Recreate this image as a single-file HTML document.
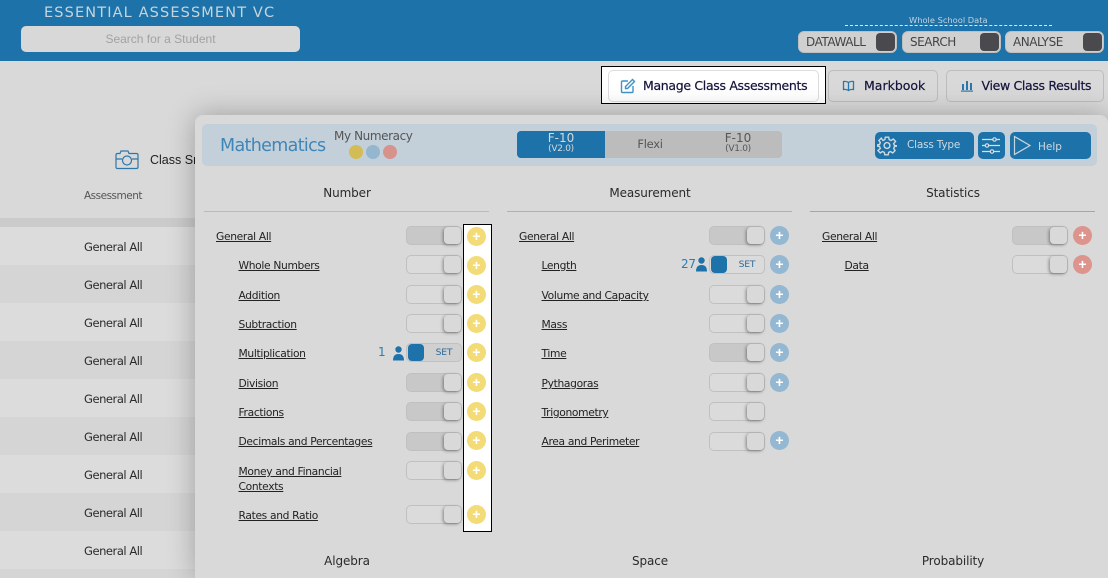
<!DOCTYPE html>
<html><head><meta charset="utf-8"><style>
html,body{margin:0;padding:0;width:1108px;height:578px;overflow:hidden}
#w{width:1108px;height:578px;position:relative;overflow:hidden;background:#d9d9d9;font-family:"DejaVu Sans","Liberation Sans",sans-serif;color:#222;font-size:11.5px}
.a{position:absolute;white-space:nowrap}
.tc{text-align:center}
.row{position:absolute;left:0;width:195px;height:38px}
.row span{position:absolute;left:84px;top:13px;font-size:11.5px;color:#2b2b2b;letter-spacing:-.45px}
.btn{position:absolute;box-sizing:border-box;border:1px solid #bdbdbd;border-radius:5px;height:32px;font-size:12.5px;font-weight:400;color:#14143c;-webkit-text-stroke:.2px #14143c;line-height:29px;white-space:nowrap}
.pill{position:absolute;top:31px;height:22px;box-sizing:border-box;background:#d0d0d0;border:1px solid #bfbfbf;border-radius:6px;font-size:12px;color:#444;line-height:20px;letter-spacing:-.45px}
.pill i{position:absolute;right:1px;top:1px;width:19px;height:18px;background:#4a4a4e;border-radius:4px}
.pill span{position:absolute;left:7px}
.lnk{position:absolute;font-size:10.7px;color:#222;text-decoration:underline;white-space:nowrap;line-height:15px;letter-spacing:-.33px}
.t{position:absolute;width:56px;height:19px;box-sizing:border-box;border:1px solid #c0c0c0;border-radius:5px;background:#dbdbdb}
.t.on{background:#c8c8c8}
.t b{position:absolute;right:0;top:0;width:17px;height:17px;background:#d9d9d9;border-radius:4px;box-shadow:-1px 1px 3px rgba(0,0,0,.4)}
.t.s b{right:auto;left:1px;top:0;width:16px;background:#1d72aa;box-shadow:none}
.t.s em{position:absolute;left:19px;width:36px;text-align:center;top:3px;font:normal 9.2px "DejaVu Sans",sans-serif;color:#2a6a9c;letter-spacing:-.2px}
.p{position:absolute;width:19px;height:19px;border-radius:50%;color:#fff;text-align:center;font:bold 14px/18px "Liberation Sans",sans-serif}
.y{background:#f3dc78}.bl{background:#94b8d2}.r{background:#dd948d}
.h{position:absolute;font-size:12px;width:120px;text-align:center;color:#2a2a2a;letter-spacing:-.1px}
</style></head><body><div id="w">
<div class="a" style="left:0;top:0;width:1108px;height:61px;background:#1c72a9"></div>
<div class="a" style="left:44px;top:5px;font-size:14.5px;letter-spacing:1.13px;color:#c7d4dc">ESSENTIAL ASSESSMENT VC</div>
<div class="a" style="left:21px;top:26px;width:279px;height:26px;border-radius:5px;background:#d8d8d8"></div>
<div class="a tc" style="left:21px;top:32px;width:279px;font:12px 'Liberation Sans',sans-serif;color:#a2a2a2">Search for a Student</div>
<div class="a" style="left:909px;top:15px;font-size:8.3px;color:#c3d3df">Whole School Data</div>
<div class="a" style="left:845px;top:25px;width:207px;border-top:1px dashed #e2e8ec"></div>
<div class="pill" style="left:798px;width:99px"><span>DATAWALL</span><i></i></div>
<div class="pill" style="left:902px;width:99px"><span>SEARCH</span><i></i></div>
<div class="pill" style="left:1005px;width:99px"><span>ANALYSE</span><i></i></div>

<div class="a" style="left:601px;top:66px;width:225px;height:38px;box-sizing:border-box;border:1px solid #000;background:#fff"></div>
<div class="btn" style="left:608px;top:70px;width:211px;background:#fff;border-color:#ddd;padding-left:34px;letter-spacing:-.32px">Manage Class Assessments</div>
<svg class="a" style="left:620px;top:78px" width="16" height="16" viewBox="0 0 16 16" fill="none" stroke="#3f93c9" stroke-width="1.4"><path d="M8 3H2.5Q1.5 3 1.5 4v9.5q0 1 1 1H12q1 0 1-1V8"/><path d="M5.5 8.500L12.500 1.500l2 2L7.500 10.500H5.500z"/></svg>
<div class="btn" style="left:828px;top:70px;width:110px;padding-left:35px;background:#d9d9d9">Markbook</div>
<svg class="a" style="left:842px;top:80px" width="13" height="12" viewBox="0 0 13 12" fill="none" stroke="#2a78ac" stroke-width="1.3"><path d="M6.500 2.500Q4.500 1 1.500 1.500v8q3-.5 5 1 2-1.500 5-1v-8q-3-.5-5 1zM6.500 2.500v8"/></svg>
<div class="btn" style="left:946px;top:70px;width:158px;padding-left:34.5px;background:#d9d9d9;letter-spacing:-.33px">View Class Results</div>
<svg class="a" style="left:960px;top:79px" width="14" height="13" viewBox="0 0 14 13" fill="#2a78ac"><rect x="2" y="5" width="2" height="6"/><rect x="6" y="2" width="2" height="9"/><rect x="10" y="4" width="2" height="7"/><rect x="1" y="11.500" width="12" height="1.200"/></svg>

<svg class="a" style="left:115px;top:149px" width="24" height="21" viewBox="0 0 24 21" fill="none" stroke="#2f77a8" stroke-width="1.2"><path d="M2.500 4.500H5l1-2.500h7l1 2.500h7.500q1.500 0 1.500 1.500v12q0 1.500-1.500 1.500h-19Q1 19.500 1 18V6q0-1.500 1.500-1.500z"/><circle cx="12" cy="11.500" r="4.500"/><path d="M1 10h6M17 10h6"/></svg>
<div class="a" style="left:150px;top:153px;font:12.5px 'Liberation Sans',sans-serif;color:#222">Class Snapshot</div>
<div class="a" style="left:84px;top:190px;font-size:10.5px;color:#555;letter-spacing:-.5px">Assessment</div>
<div class="a" style="left:0;top:218px;width:195px;height:9px;background:#cbcbcb"></div>
<div class="row" style="top:227px;background:#dcdcdc"><span>General All</span></div>
<div class="row" style="top:265px;background:#d5d5d5"><span>General All</span></div>
<div class="row" style="top:303px;background:#dcdcdc"><span>General All</span></div>
<div class="row" style="top:341px;background:#d5d5d5"><span>General All</span></div>
<div class="row" style="top:379px;background:#dcdcdc"><span>General All</span></div>
<div class="row" style="top:417px;background:#d5d5d5"><span>General All</span></div>
<div class="row" style="top:455px;background:#dcdcdc"><span>General All</span></div>
<div class="row" style="top:493px;background:#d5d5d5"><span>General All</span></div>
<div class="row" style="top:531px;background:#dcdcdc"><span>General All</span></div>
<div class="row" style="top:569px;height:9px;background:#d5d5d5"></div>

<div class="a" style="left:195px;top:115px;width:913px;height:463px;background:#d9d9d9;border-radius:8px 8px 0 0;box-shadow:0 0 28px rgba(0,0,0,.28)"></div>
<div class="a" style="left:202px;top:124px;width:895px;height:42px;background:#c3d0da;border-radius:5px"></div>
<div class="a" style="left:220px;top:136px;font-size:17.5px;color:#3f86b8;letter-spacing:-.66px">Mathematics</div>
<div class="a" style="left:334px;top:129px;font-size:12px;color:#555;letter-spacing:-.4px">My Numeracy</div>
<div class="a" style="left:349px;top:145px;width:14px;height:14px;border-radius:50%;background:#d4bc55"></div>
<div class="a" style="left:366px;top:145px;width:14px;height:14px;border-radius:50%;background:#94b6ce"></div>
<div class="a" style="left:383px;top:145px;width:14px;height:14px;border-radius:50%;background:#d6928b"></div>
<div class="a" style="left:517px;top:131px;width:265px;height:27px;background:#bcbcbc;border-radius:4px"></div>
<div class="a" style="left:517px;top:131px;width:88px;height:27px;background:#1c72a9;border-radius:4px 0 0 4px"></div>
<div class="a tc" style="left:517px;top:132px;width:88px;font-size:12px;line-height:13px;color:#d9d9d9">F-10<br><span style="font-size:9px;line-height:9px;display:block;margin-top:0;letter-spacing:-.3px">(V2.0)</span></div>
<div class="a tc" style="left:605px;top:137px;width:90px;font-size:11.5px;color:#555;letter-spacing:-.3px">Flexi</div>
<div class="a tc" style="left:694px;top:132px;width:88px;font-size:12px;line-height:13px;color:#555">F-10<br><span style="font-size:9px;line-height:9px;display:block;margin-top:0;letter-spacing:-.3px">(V1.0)</span></div>

<div class="a" style="left:875px;top:132px;width:99px;height:27px;background:#1c72a9;border-radius:5px"></div>
<svg class="a" style="left:877px;top:135px" width="20" height="21" viewBox="0 0 24 24" fill="none" stroke="#cfd9df" stroke-width="1.7"><circle cx="12" cy="12" r="3.500"/><path d="M10 2h4l.6 3 2.300 1 2.600-1.700 2.800 2.800L20 9.700l1 2.300 3 .6v-1.200 1.200l-3 .6-1 2.300 1.700 2.600-2.800 2.800-2.600-1.700-2.300 1-.6 3h-4l-.6-3-2.300-1-2.600 1.700-2.800-2.800L4 15.500l-1-2.300-3-.6v-1.200l3-.6 1-2.300-1.700-2.600 2.800-2.800L7.100 6l2.300-1z"/></svg>
<div class="a" style="left:907px;top:139px;font-size:10.5px;color:#cfd9df;letter-spacing:-.2px">Class Type</div>
<div class="a" style="left:978px;top:132px;width:27px;height:27px;background:#1c72a9;border-radius:5px"></div>
<svg class="a" style="left:981px;top:136px" width="20" height="19" viewBox="0 0 20 19" fill="none" stroke="#d9e0e5" stroke-width="1.2"><path d="M1 3.500h18M1 9.500h18M1 15.500h18"/><circle cx="13.500" cy="3.500" r="1.700" fill="#1c72a9"/><circle cx="6" cy="9.500" r="1.700" fill="#1c72a9"/><circle cx="11" cy="15.500" r="1.700" fill="#1c72a9"/></svg>
<div class="a" style="left:1010px;top:132px;width:81px;height:27px;background:#1c72a9;border-radius:5px"></div>
<svg class="a" style="left:1013px;top:135px" width="19" height="21" viewBox="0 0 19 21" fill="none" stroke="#c9d5dd" stroke-width="1.2"><path d="M1.500 1.500V19.500L17 10.500z"/></svg>
<div class="a" style="left:1038px;top:141px;font-size:10.5px;color:#cfd9df">Help</div>

<div class="h" style="left:287px;top:186px">Number</div>
<div class="h" style="left:590px;top:186px">Measurement</div>
<div class="h" style="left:893px;top:186px">Statistics</div>
<div class="a" style="left:204px;top:211px;width:285px;height:1px;background:#d2c069"></div>
<div class="a" style="left:507px;top:211px;width:285px;height:1px;background:#9ab6c9"></div>
<div class="a" style="left:810px;top:211px;width:285px;height:1px;background:#d9928a"></div>

<div class="a" style="left:463px;top:224px;width:29px;height:308px;box-sizing:border-box;border:1px solid #000;background:#fff"></div>

<!-- Number -->
<span class="lnk" style="left:216px;top:229px">General All</span><div class="t on" style="left:406px;top:226px"><b></b></div><div class="p y" style="left:467px;top:227px">+</div>
<span class="lnk" style="left:238.5px;top:258px">Whole Numbers</span><div class="t" style="left:406px;top:255px"><b></b></div><div class="p y" style="left:467px;top:256px">+</div>
<span class="lnk" style="left:238.5px;top:288px">Addition</span><div class="t" style="left:406px;top:285px"><b></b></div><div class="p y" style="left:467px;top:285px">+</div>
<span class="lnk" style="left:238.5px;top:317px">Subtraction</span><div class="t" style="left:406px;top:314px"><b></b></div><div class="p y" style="left:467px;top:314px">+</div>
<span class="lnk" style="left:238.5px;top:346px">Multiplication</span>
<div class="a" style="left:378px;top:345px;font-size:12px;color:#2f7cb0">1</div>
<svg class="a" style="left:392px;top:346px" width="13" height="15" viewBox="0 0 13 15" fill="#1d72aa"><circle cx="6.500" cy="3.500" r="3.200"/><path d="M1 14.500Q1 8 6.500 8T12 14.500z"/></svg>
<div class="t s" style="left:406px;top:343px;background:#d0d0d0"><b></b><em>SET</em></div><div class="p y" style="left:467px;top:343px">+</div>
<span class="lnk" style="left:238.5px;top:376px">Division</span><div class="t on" style="left:406px;top:373px"><b></b></div><div class="p y" style="left:467px;top:373px">+</div>
<span class="lnk" style="left:238.5px;top:405px">Fractions</span><div class="t on" style="left:406px;top:402px"><b></b></div><div class="p y" style="left:467px;top:402px">+</div>
<span class="lnk" style="left:238.5px;top:434px">Decimals and Percentages</span><div class="t on" style="left:406px;top:432px"><b></b></div><div class="p y" style="left:467px;top:431px">+</div>
<span class="lnk" style="left:238.5px;top:464px">Money and Financial<br>Contexts</span><div class="t" style="left:406px;top:461px"><b></b></div><div class="p y" style="left:467px;top:461px">+</div>
<span class="lnk" style="left:238.5px;top:508px">Rates and Ratio</span><div class="t" style="left:406px;top:505px"><b></b></div><div class="p y" style="left:467px;top:505px">+</div>

<!-- Measurement -->
<span class="lnk" style="left:519px;top:229px">General All</span><div class="t on" style="left:709px;top:226px"><b></b></div><div class="p bl" style="left:770px;top:226px">+</div>
<span class="lnk" style="left:541.5px;top:258px">Length</span>
<div class="a" style="left:681px;top:257px;font-size:12px;color:#2f7cb0;letter-spacing:-.3px">27</div>
<svg class="a" style="left:695px;top:257px" width="13" height="15" viewBox="0 0 13 15" fill="#1d72aa"><circle cx="6.500" cy="3.500" r="3.200"/><path d="M1 14.500Q1 8 6.500 8T12 14.500z"/></svg>
<div class="t s" style="left:709px;top:255px"><b></b><em>SET</em></div><div class="p bl" style="left:770px;top:255px">+</div>
<span class="lnk" style="left:541.5px;top:288px">Volume and Capacity</span><div class="t" style="left:709px;top:285px"><b></b></div><div class="p bl" style="left:770px;top:285px">+</div>
<span class="lnk" style="left:541.5px;top:317px">Mass</span><div class="t" style="left:709px;top:314px"><b></b></div><div class="p bl" style="left:770px;top:314px">+</div>
<span class="lnk" style="left:541.5px;top:346px">Time</span><div class="t on" style="left:709px;top:343px"><b></b></div><div class="p bl" style="left:770px;top:343px">+</div>
<span class="lnk" style="left:541.5px;top:376px">Pythagoras</span><div class="t" style="left:709px;top:373px"><b></b></div><div class="p bl" style="left:770px;top:373px">+</div>
<span class="lnk" style="left:541.5px;top:405px">Trigonometry</span><div class="t" style="left:709px;top:402px"><b></b></div>
<span class="lnk" style="left:541.5px;top:434px">Area and Perimeter</span><div class="t" style="left:709px;top:432px"><b></b></div><div class="p bl" style="left:770px;top:431px">+</div>

<!-- Statistics -->
<span class="lnk" style="left:822px;top:229px">General All</span><div class="t on" style="left:1012px;top:226px"><b></b></div><div class="p r" style="left:1073px;top:226px">+</div>
<span class="lnk" style="left:844.5px;top:258px">Data</span><div class="t" style="left:1012px;top:255px"><b></b></div><div class="p r" style="left:1073px;top:255px">+</div>

<div class="h" style="left:287px;top:554px">Algebra</div>
<div class="h" style="left:590px;top:554px">Space</div>
<div class="h" style="left:893px;top:554px">Probability</div>
</div></body></html>
